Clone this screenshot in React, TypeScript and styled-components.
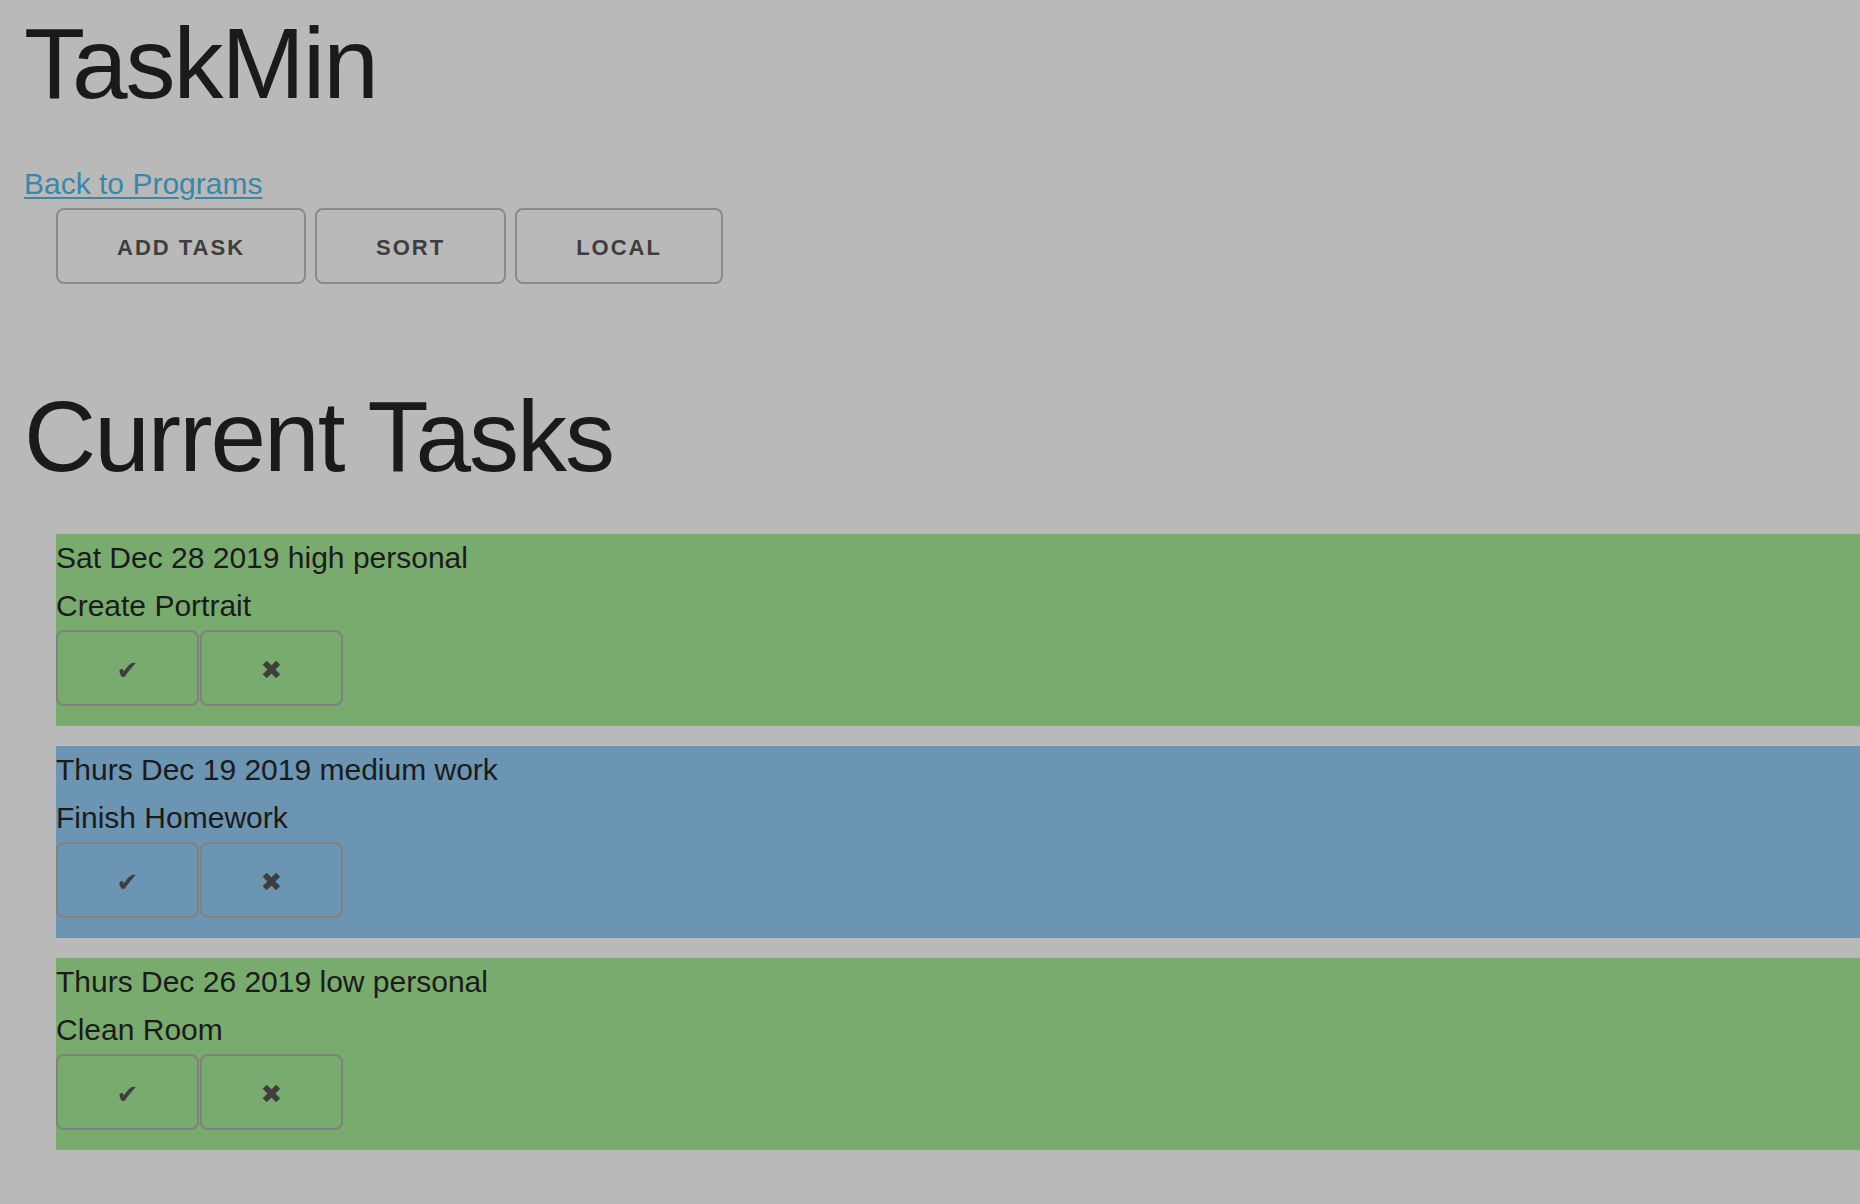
import React from "react";
import styled, { createGlobalStyle } from "styled-components";

const GlobalStyle = createGlobalStyle`
  html, body {
    margin: 0;
    padding: 0;
    background: #b9b9b9;
  }
  body {
    font-family: "Liberation Sans", Arial, Helvetica, sans-serif;
    color: #1b1b1b;
    overflow-x: hidden;
  }
`;

const Page = styled.div`
  padding: 3px 0 40px 24px;
`;

const Title = styled.h1`
  margin: 0 0 37px;
  font-size: 100px;
  line-height: 120px;
  font-weight: 400;
  letter-spacing: -2px;
  color: #1a1a1a;
`;

const NavLine = styled.div`
  font-size: 30px;
  line-height: 48px;
  height: 48px;
`;

const BackLink = styled.a`
  color: #3a88a9;
  text-decoration: underline;
  text-underline-offset: 3px;
  text-decoration-thickness: 2px;
  cursor: pointer;
`;

const Toolbar = styled.div`
  display: flex;
  gap: 9px;
  margin-left: 32px;
`;

const ToolButton = styled.button`
  height: 76px;
  padding: 4px 59px 0;
  box-sizing: border-box;
  background: transparent;
  border: 2px solid #8a8a8a;
  border-radius: 8px;
  font-family: "Liberation Sans", Arial, sans-serif;
  font-size: 22px;
  font-weight: 700;
  letter-spacing: 2px;
  text-transform: uppercase;
  color: #3e3e3e;
  cursor: pointer;
  white-space: nowrap;
`;

const SectionTitle = styled.h1`
  margin: 92px 0 38px;
  font-size: 100px;
  line-height: 120px;
  font-weight: 400;
  letter-spacing: -2px;
  color: #1a1a1a;
`;

const TaskList = styled.div`
  display: flex;
  flex-direction: column;
  gap: 20px;
  margin-left: 32px;
`;

const TaskCard = styled.div<{ $bg: string }>`
  background: ${(p) => p.$bg};
  padding-bottom: 20px;
`;

const TaskLine = styled.div`
  font-size: 30px;
  line-height: 48px;
  height: 48px;
  white-space: nowrap;
`;

const ActionRow = styled.div`
  display: flex;
  gap: 1px;
`;

const ActionButton = styled.button`
  width: 143px;
  height: 76px;
  box-sizing: border-box;
  background: transparent;
  border: 2px solid #818181;
  border-radius: 8px;
  padding: 4px 0 0;
  font-family: "DejaVu Sans", "Liberation Sans", sans-serif;
  font-size: 26px;
  font-weight: 700;
  color: #3e3e3e;
  cursor: pointer;
  display: flex;
  align-items: center;
  justify-content: center;
`;

type Task = { meta: string; name: string; bg: string };

const tasks: Task[] = [
  { meta: "Sat Dec 28 2019 high personal", name: "Create Portrait", bg: "#79ab6e" },
  { meta: "Thurs Dec 19 2019 medium work", name: "Finish Homework", bg: "#6b95b2" },
  { meta: "Thurs Dec 26 2019 low personal", name: "Clean Room", bg: "#79ab6e" },
];

export default function App() {
  return (
    <>
      <GlobalStyle />
      <Page>
        <Title>TaskMin</Title>
        <NavLine>
          <BackLink>Back to Programs</BackLink>
        </NavLine>
        <Toolbar>
          <ToolButton>Add Task</ToolButton>
          <ToolButton>Sort</ToolButton>
          <ToolButton>Local</ToolButton>
        </Toolbar>
        <SectionTitle>Current Tasks</SectionTitle>
        <TaskList>
          {tasks.map((t) => (
            <TaskCard key={t.name} $bg={t.bg}>
              <TaskLine>{t.meta}</TaskLine>
              <TaskLine>{t.name}</TaskLine>
              <ActionRow>
                <ActionButton>{"\u2714\uFE0E"}</ActionButton>
                <ActionButton>{"\u2716\uFE0E"}</ActionButton>
              </ActionRow>
            </TaskCard>
          ))}
        </TaskList>
      </Page>
    </>
  );
}
